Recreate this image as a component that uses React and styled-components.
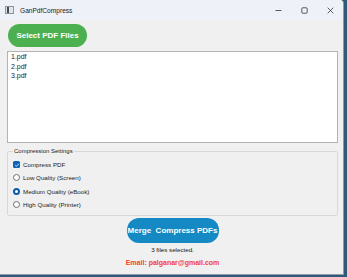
import React from 'react';
import styled, { createGlobalStyle } from 'styled-components';

const GlobalStyle = createGlobalStyle`
  html, body {
    margin: 0;
    padding: 0;
    background: #2e5a78;
    overflow: hidden;
  }
  body {
    font-family: "Liberation Sans", Arial, sans-serif;
  }
`;

const Window = styled.div`
  width: 343px;
  height: 274px;
  background: #f0f0f0;
  border-right: 1px solid #8e9aa6;
  border-bottom: 1px solid #8e9aa6;
  border-top-right-radius: 4px;
  display: flex;
  flex-direction: column;
  overflow: hidden;
`;

const TitleBar = styled.div`
  height: 20px;
  flex: none;
  background: #eef2f8;
  display: flex;
  align-items: center;
`;

const AppIcon = styled.div`
  width: 7px;
  height: 6px;
  margin-left: 5px;
  border: 1px solid #8c959e;
  background: linear-gradient(90deg, #dfe6ec 0 1px, #3f4a55 1px 3px, #dfe6ec 3px);
`;

const Title = styled.span`
  margin-left: 6px;
  font-size: 6.6px;
  color: #1b1b1b;
  flex: 1;
`;

const Controls = styled.div`
  display: flex;
  height: 100%;
`;

const ControlButton = styled.div`
  width: 26px;
  height: 100%;
  display: flex;
  align-items: center;
  justify-content: center;
`;

const Body = styled.div`
  flex: 1;
  display: flex;
  flex-direction: column;
  padding: 4px 5px 0 7px;
`;

const PillButton = styled.button`
  border: none;
  border-radius: 12px;
  color: #fff;
  font-family: "Liberation Sans", Arial, sans-serif;
  font-weight: bold;
  font-size: ${(p) => p.$size}px;
  background: ${(p) => p.$bg};
  width: ${(p) => p.$w}px;
  height: ${(p) => p.$h}px;
  padding: 0;
  flex: none;
  white-space: nowrap;
`;

const SelectButton = styled(PillButton)`
  margin-left: 1px;
`;

const FileList = styled.div`
  margin-top: 4px;
  height: 90px;
  border: 1px solid #b4b4b4;
  background: #fff;
  padding: 0 3px;
`;

const FileItem = styled.div`
  font-size: 7px;
  line-height: 9.7px;
  color: #1e1e1e;
`;

const Group = styled.fieldset`
  margin: 4px 0 0 0;
  padding: 3px 0 4px 5px;
  border: 1px solid #d8d8d8;
  border-radius: 2px;
  min-width: 0;
`;

const Legend = styled.legend`
  font-size: 6px;
  line-height: 8px;
  padding: 0 1px;
  margin-left: 0;
  color: #222;
`;

const OptionRow = styled.label`
  display: flex;
  align-items: center;
  height: 13.3px;
  font-size: 6.2px;
  color: #1b1b1b;
  gap: 3px;
`;

const CheckBox = styled.span`
  width: 7px;
  height: 7px;
  border-radius: 1.5px;
  background: #0f62b8;
  display: flex;
  align-items: center;
  justify-content: center;
`;

const Radio = styled.span`
  width: 7px;
  height: 7px;
  box-sizing: border-box;
  border-radius: 50%;
  border: ${(p) => (p.$on ? '2.2px solid #0f5aa8' : '0.8px solid #6f6f6f')};
  background: #fff;
`;

const Footer = styled.div`
  display: flex;
  flex-direction: column;
  align-items: center;
  margin-top: 2px;
`;

const Status = styled.div`
  font-size: 6.2px;
  line-height: 8px;
  margin-top: 3px;
  color: #111;
`;

const Email = styled.div`
  font-size: 7px;
  font-weight: bold;
  color: #f2442f;
  margin-top: 5px;
`;

const options = [
  { label: 'Low Quality (Screen)', on: false },
  { label: 'Medium Quality (eBook)', on: true },
  { label: 'High Quality (Printer)', on: false },
];

const App = () => {
  return (
    <>
      <GlobalStyle />
      <Window>
        <TitleBar>
          <AppIcon />
          <Title>GanPdfCompress</Title>
          <Controls>
            <ControlButton>
              <svg width="7" height="7" viewBox="0 0 7 7">
                <line x1="0.5" y1="3.5" x2="6.5" y2="3.5" stroke="#333" strokeWidth="0.8" />
              </svg>
            </ControlButton>
            <ControlButton>
              <svg width="7" height="7" viewBox="0 0 7 7">
                <rect x="0.8" y="0.8" width="5.4" height="5.4" rx="0.8" fill="none" stroke="#333" strokeWidth="0.8" />
              </svg>
            </ControlButton>
            <ControlButton>
              <svg width="7" height="7" viewBox="0 0 7 7">
                <path d="M0.7 0.7 L6.3 6.3 M6.3 0.7 L0.7 6.3" stroke="#333" strokeWidth="0.8" />
              </svg>
            </ControlButton>
          </Controls>
        </TitleBar>
        <Body>
          <SelectButton $bg="#4caf50" $w={79} $h={23} $size={8}>
            Select PDF Files
          </SelectButton>
          <FileList>
            <FileItem>1.pdf</FileItem>
            <FileItem>2.pdf</FileItem>
            <FileItem>3.pdf</FileItem>
          </FileList>
          <Group>
            <Legend>Compression Settings</Legend>
            <OptionRow>
              <CheckBox>
                <svg width="6" height="6" viewBox="0 0 6 6">
                  <path d="M1.2 3.1 L2.5 4.3 L4.9 1.7" fill="none" stroke="#fff" strokeWidth="0.8" />
                </svg>
              </CheckBox>
              Compress PDF
            </OptionRow>
            {options.map((o) => (
              <OptionRow key={o.label}>
                <Radio $on={o.on} />
                {o.label}
              </OptionRow>
            ))}
          </Group>
          <Footer>
            <PillButton $bg="#1489c4" $w={92} $h={25} $size={8}>
              Merge&nbsp;&nbsp;Compress PDFs
            </PillButton>
            <Status>3 files selected.</Status>
            <Email>Email: palganar@gmail.com</Email>
          </Footer>
        </Body>
      </Window>
    </>
  );
};

export default App;
